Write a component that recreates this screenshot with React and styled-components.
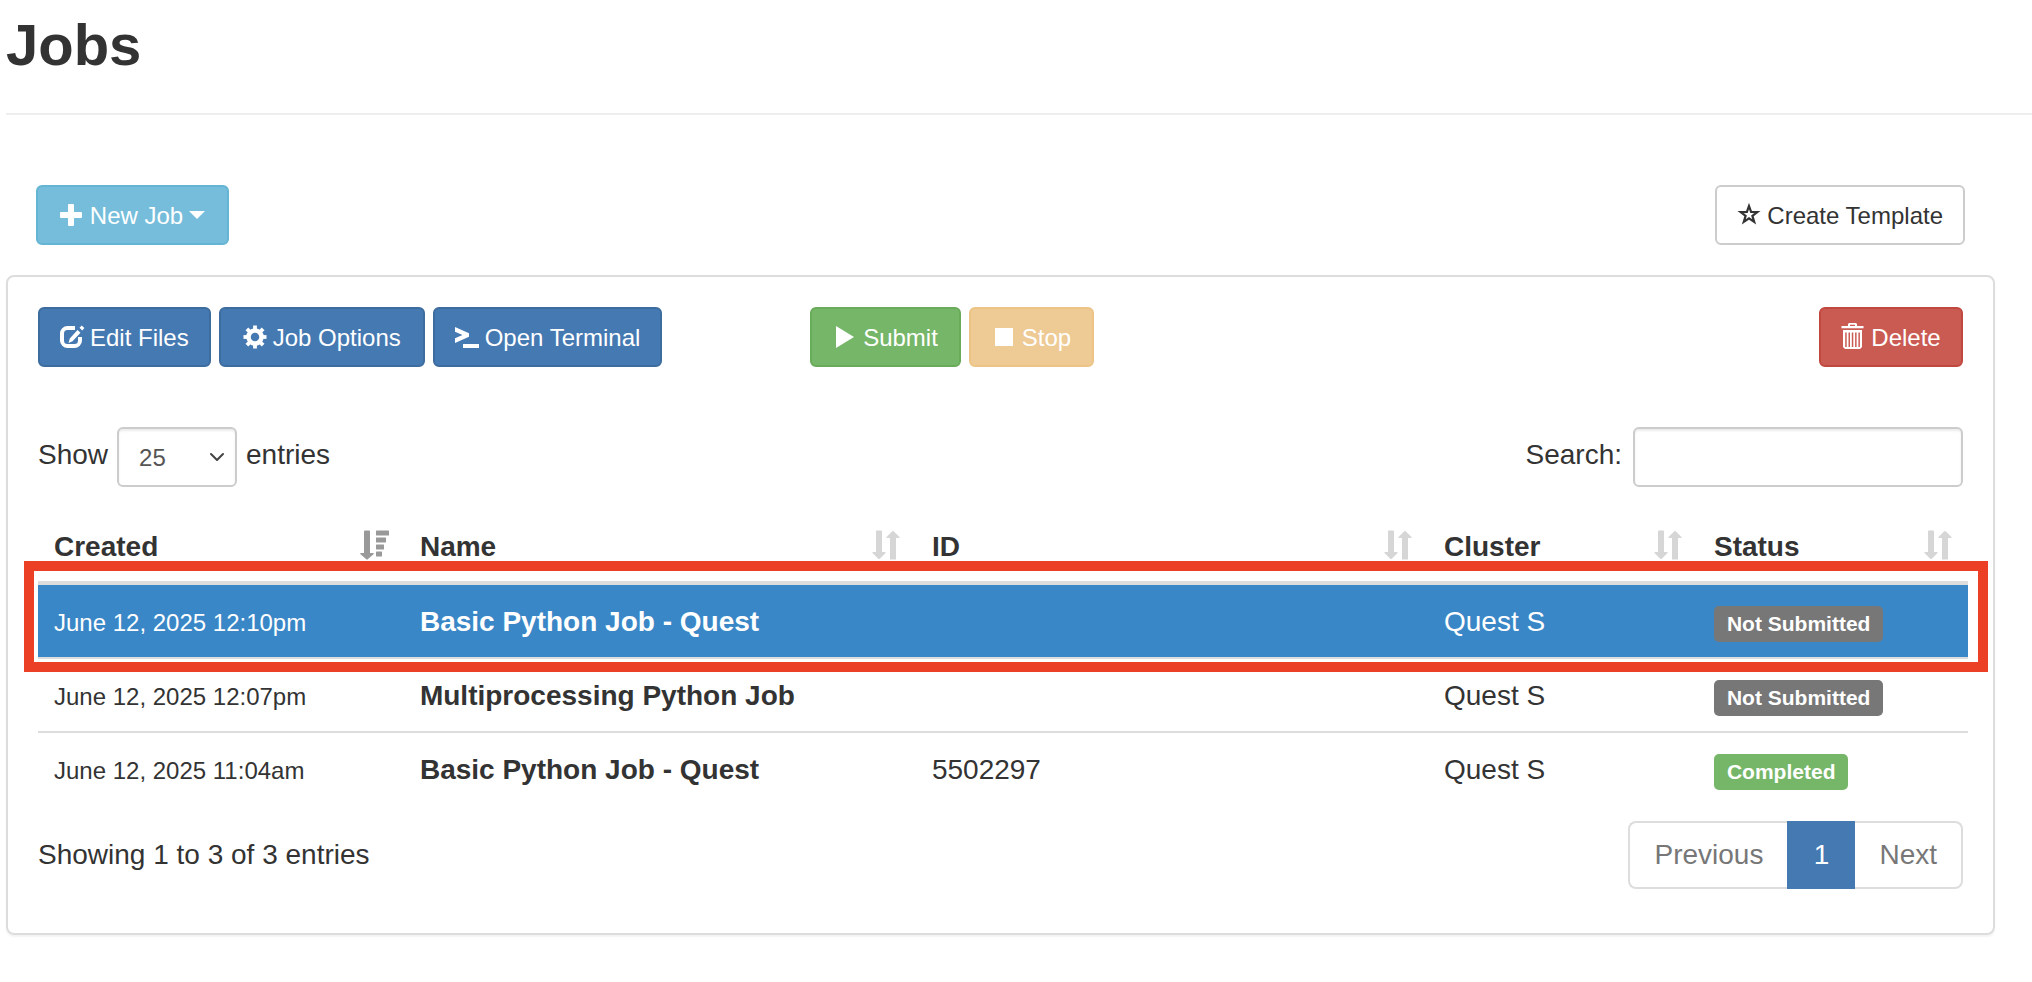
import React from "react";
import styled, { createGlobalStyle, css } from "styled-components";

const GlobalStyle = createGlobalStyle`
  *, *::before, *::after { box-sizing: border-box; }
  body {
    margin: 0;
    background: #fff;
    color: #333;
    font: 28px/40px "Liberation Sans", Arial, sans-serif;
  }
`;

const Page = styled.main`padding: 0 37px 48px 6px;`;
const PageHeader = styled.header`
  margin-right: -37px;
  padding: 12px 0 35px;
  border-bottom: 2px solid #eee;
`;
const Title = styled.h1`margin: 0; font-size: 58px; line-height: 66px; font-weight: 700;`;
const Bar = styled.div`display: flex; justify-content: space-between; align-items: center;`;
const TopBar = styled(Bar)`padding: 70px 30px 30px;`;
const Group = styled.div`display: flex; gap: 8px;`;

const tones = {
  info: ["#75bdda", "#64b5d3", "#fff"],
  plain: ["#fff", "#ccc", "#333"],
  primary: ["#4579b2", "#3d6c9f", "#fff"],
  success: ["#76b668", "#68ab58", "#fff"],
  warning: ["#eeca95", "#edc486", "#fff"],
  danger: ["#ca5b53", "#c1483f", "#fff"],
};
const Button = styled.button`
  display: flex;
  align-items: center;
  justify-content: center;
  gap: 6px;
  height: 60px;
  min-width: ${(p) => p.$min || 0}px;
  padding: 0 20px;
  border: 2px solid ${(p) => tones[p.$tone][1]};
  border-radius: 6px;
  background: ${(p) => tones[p.$tone][0]};
  color: ${(p) => tones[p.$tone][2]};
  font: 24px/34px "Liberation Sans", Arial, sans-serif;
  white-space: nowrap;
`;
const ButtonText = styled.span`padding-top: 2px;`;
const Glyph = styled.svg`
  display: block;
  width: 24px;
  height: ${(p) => (p.$tall ? 28 : 24)}px;
  flex: none;
  fill: currentColor;
  overflow: visible;
`;
const Caret = styled.span`
  border: 8px solid transparent;
  border-top-color: currentColor;
  border-bottom: 0;
`;

const Panel = styled.section`
  padding: 30px 30px 44px;
  border: 2px solid #ddd;
  border-radius: 8px;
  box-shadow: 0 2px 2px rgba(0, 0, 0, 0.05);
`;
const Toolbar = styled.div`
  display: grid;
  grid-template-columns: 772px 1fr auto;
  align-items: center;
`;
const Filters = styled(Bar)`margin-top: 60px;`;
const Label = styled.label`display: flex; align-items: center; gap: 9px;`;
const LabelText = styled.span`padding-bottom: 4px;`;
const field = css`
  height: 60px;
  border: 2px solid #ccc;
  border-radius: 6px;
  background-color: #fff;
  box-shadow: inset 0 2px 2px rgba(0, 0, 0, 0.075);
  color: #555;
  font: 24px/34px "Liberation Sans", Arial, sans-serif;
`;
const SelectBox = styled.span`display: grid; align-items: center;`;
const Select = styled.select`
  ${field}
  grid-area: 1 / 1;
  width: 120px;
  padding: 2px 20px 0;
  appearance: none;
`;
const Chevron = styled.svg`
  grid-area: 1 / 1;
  justify-self: end;
  width: 16px;
  height: 12px;
  margin-right: 12px;
  fill: none;
  stroke: #444;
  stroke-width: 2;
  stroke-linecap: round;
  stroke-linejoin: round;
  pointer-events: none;
`;
const Search = styled.input`${field} width: 330px; padding: 0 24px; margin-left: 2px;`;

const Table = styled.table`
  width: calc(100% + 5px);
  margin-top: 34px;
  border-collapse: separate;
  border-spacing: 0;
  table-layout: fixed;
`;
const Col = styled.col`width: ${(p) => p.$w}%;`;
const HeadCell = styled.th`
  padding: 6px 16px 14px;
  border-bottom: 4px solid #ddd;
  text-align: left;
`;
const HeadInner = styled(Bar)`height: 40px;`;
const SortGlyph = styled.svg`
  display: block;
  width: 30px;
  height: 30px;
  margin-bottom: 4px;
  overflow: visible;
  fill: ${(p) => (p.$active ? "#999" : "#d6d6d6")};
`;
const Row = styled.tr`
  ${(p) => p.$selected && css`
    position: relative;
    background: #3a87c7;
    color: #fff;
    &::after {
      content: "";
      position: absolute;
      inset: -24px -20px -13px -14px;
      border: 10px solid #eb4026;
      pointer-events: none;
    }
  `}
`;
const Cell = styled.td`
  padding: 17px 16px 15px;
  border-bottom: ${(p) => (p.$last ? "0" : "2px solid #ddd")};
  vertical-align: top;
  line-height: 40px;
  font-weight: ${(p) => (p.$bold ? 700 : 400)};
  white-space: nowrap;
`;
const Small = styled.span`font-size: 24px; line-height: 24px;`;
const Badge = styled.span`
  padding: 6px 13px 7px;
  border-radius: 5px;
  background: ${(p) => (p.$done ? "#76b668" : "#777")};
  color: #fff;
  font-size: 21px;
  line-height: 24px;
  font-weight: 700;
`;

const Footer = styled(Bar)`margin-top: 16px;`;
const Info = styled.p`margin: 0;`;
const Pager = styled.nav`display: flex;`;
const PageLink = styled.a`
  height: 68px;
  min-width: 68px;
  padding: 12px 24px;
  border: 2px solid ${(p) => (p.$active ? "#4579b2" : "#ddd")};
  background: ${(p) => (p.$active ? "#4579b2" : "#fff")};
  color: ${(p) => (p.$active ? "#fff" : "#777")};
  text-align: center;
  text-decoration: none;
  &:first-child { border-right: 0; border-radius: 8px 0 0 8px; }
  &:last-child { border-left: 0; border-radius: 0 8px 8px 0; }
`;

const Plus = () => (
  <Glyph viewBox="0 0 24 24"><path d="M8 2a1 1 0 0 1 1-1h4a1 1 0 0 1 1 1v7h7a1 1 0 0 1 1 1v4a1 1 0 0 1-1 1h-7v7a1 1 0 0 1-1 1H9a1 1 0 0 1-1-1v-7H1a1 1 0 0 1-1-1v-4a1 1 0 0 1 1-1h7z" /></Glyph>
);
const Edit = () => (
  <Glyph viewBox="0 0 24 24">
    <path fill="none" stroke="currentColor" strokeWidth="4" d="M15 3H7.500A5.500 5.500 0 0 0 2 8.500v7A5.500 5.500 0 0 0 7.500 21h7a5.500 5.500 0 0 0 5.500-5.500V12" />
    <path d="M8.500 18l1.300-4.500L17.500 5l3 2.700-8 8.600zM19.500 2.800L21.700.4l2.700 2.600-2.200 2.400z" />
  </Glyph>
);
const Gear = () => (
  <Glyph viewBox="0 0 24 24" stroke="currentColor">
    <circle cx="12" cy="12" r="6.500" fill="none" strokeWidth="4.500" />
    {[0, 45, 90, 135, 180, 225, 270, 315].map((a) => (
      <path key={a} d="M12 4.500V.5" strokeWidth="3.800" transform={`rotate(${a} 12 12)`} />
    ))}
  </Glyph>
);
const Terminal = () => (
  <Glyph viewBox="0 0 24 24"><path d="M0 2l14 6.200v3.600L0 18v-4.800L7.500 10 0 6.800zM8 19h16v4H8z" /></Glyph>
);
const Play = () => <Glyph viewBox="0 0 24 24"><path d="M3 1v22L21 12z" /></Glyph>;
const Stop = () => <Glyph viewBox="0 0 24 24"><path d="M3 3h18v18H3z" /></Glyph>;
const Star = () => (
  <Glyph viewBox="0 0 24 24">
    <path fill="none" stroke="currentColor" strokeWidth="2.200" strokeMiterlimit="8" d="M12 3l2.100 5.900 6.300.2-5 3.800 1.800 6-5.200-3.500-5.200 3.500 1.800-6-5-3.800 6.300-.2z" />
  </Glyph>
);
const Trash = () => (
  <Glyph $tall viewBox="0 0 24 28">
    <path fillRule="evenodd" d="M7 3V1l1-1h7l1 1v2h6.500v2.200H.5V3zM9 3h5V1.800H9zM2 7h19v17l-2 2H4l-2-2zM4.200 9.500V24h1.500V9.500zM7.500 9.500V24H9V9.500zM10.800 9.500V24h1.500V9.500zM14.100 9.500V24h1.500V9.500zM17.400 9.500V24h1.500V9.500z" />
  </Glyph>
);
const SortIcon = ({ active }) => (
  <SortGlyph viewBox="0 0 30 30" $active={active}>
    {active ? (
      <path d="M6 1.500Q6 .5 7 .5h4q1 0 1 1V23h3q1.500 0 .5 1.200L10 29q-1 1-2 0l-5.500-4.800Q1.500 23 3 23h3zM18.500.5h12q.5 0 .5.5v4q0 .5-.5.5h-12Q18 5.500 18 5V1q0-.5.5-.5zM18.500 7.500h9q.5 0 .5.5v4q0 .5-.5.5h-9Q18 12.500 18 12V8q0-.5.5-.5zM18.500 14.500h7q.5 0 .5.5v4q0 .5-.5.5h-7Q18 19.500 18 19v-4q0-.5.5-.5zM18.500 21.500h5q.5 0 .5.5v4q0 .5-.5.5h-5Q18 26.500 18 26v-4q0-.5.5-.5z" />
    ) : (
      <path d="M6 1.500Q6 .5 7 .5h4q1 0 1 1V22h3q1 .2.500 1L10 28.500q-1 1-2 0L2.500 23q-.5-.8.500-1h3zM20 29.500V8h-3q-1-.2-.5-1L22 1.500q1-1 2 0L29.500 7q.5.800-.5 1h-3v21.500z" />
    )}
  </SortGlyph>
);

const columns = [["Created", 18.96], ["Name", 26.53], ["ID", 26.53], ["Cluster", 13.99], ["Status", 13.99]];
const jobs = [
  ["June 12, 2025 12:10pm", "Basic Python Job - Quest", "", "Quest S", "Not Submitted"],
  ["June 12, 2025 12:07pm", "Multiprocessing Python Job", "", "Quest S", "Not Submitted"],
  ["June 12, 2025 11:04am", "Basic Python Job - Quest", "5502297", "Quest S", "Completed"],
];

export default function App() {
  return (
    <>
      <GlobalStyle />
      <Page>
        <PageHeader><Title>Jobs</Title></PageHeader>
        <TopBar>
          <Button $tone="info" $min={193} type="button"><Plus /><ButtonText>New Job</ButtonText><Caret /></Button>
          <Button $tone="plain" type="button"><Star /><ButtonText>Create Template</ButtonText></Button>
        </TopBar>
        <Panel>
          <Toolbar>
            <Group>
              <Button $tone="primary" type="button"><Edit /><ButtonText>Edit Files</ButtonText></Button>
              <Button $tone="primary" $min={206} type="button"><Gear /><ButtonText>Job Options</ButtonText></Button>
              <Button $tone="primary" type="button"><Terminal /><ButtonText>Open Terminal</ButtonText></Button>
            </Group>
            <Group>
              <Button $tone="success" $min={151} type="button"><Play /><ButtonText>Submit</ButtonText></Button>
              <Button $tone="warning" $min={125} type="button"><Stop /><ButtonText>Stop</ButtonText></Button>
            </Group>
            <Button $tone="danger" $min={144} type="button"><Trash /><ButtonText>Delete</ButtonText></Button>
          </Toolbar>
          <Filters>
            <Label>
              <LabelText>Show</LabelText>
              <SelectBox>
                <Select defaultValue="25"><option>10</option><option>25</option><option>50</option></Select>
                <Chevron viewBox="0 0 16 12"><path d="M2 3l6 6 6-6" /></Chevron>
              </SelectBox>
              <LabelText>entries</LabelText>
            </Label>
            <Label><LabelText>Search:</LabelText><Search type="search" /></Label>
          </Filters>
          <Table>
            <colgroup>{columns.map(([name, w]) => <Col key={name} $w={w} />)}</colgroup>
            <thead>
              <tr>
                {columns.map(([name], i) => (
                  <HeadCell key={name}><HeadInner>{name}<SortIcon active={i === 0} /></HeadInner></HeadCell>
                ))}
              </tr>
            </thead>
            <tbody>
              {jobs.map(([created, name, id, cluster, status], i) => {
                const last = i === jobs.length - 1;
                return (
                  <Row key={created} $selected={i === 0}>
                    <Cell $last={last}><Small>{created}</Small></Cell>
                    <Cell $last={last} $bold>{name}</Cell>
                    <Cell $last={last}>{id}</Cell>
                    <Cell $last={last}>{cluster}</Cell>
                    <Cell $last={last}><Badge $done={status === "Completed"}>{status}</Badge></Cell>
                  </Row>
                );
              })}
            </tbody>
          </Table>
          <Footer>
            <Info>Showing 1 to 3 of 3 entries</Info>
            <Pager aria-label="Jobs pages">
              <PageLink href="#previous">Previous</PageLink>
              <PageLink href="#1" $active>1</PageLink>
              <PageLink href="#next">Next</PageLink>
            </Pager>
          </Footer>
        </Panel>
      </Page>
    </>
  );
}
